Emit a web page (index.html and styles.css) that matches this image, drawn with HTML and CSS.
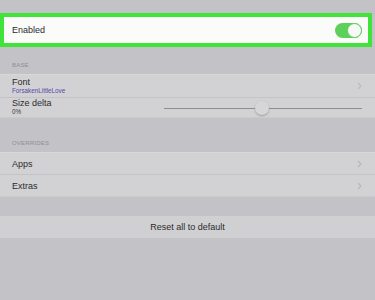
FILE: index.html
```
<!DOCTYPE html>
<html>
<head>
<meta charset="utf-8">
<link rel="stylesheet" href="styles.css">
</head>
<body>
<div class="page">
  <div class="highlight">
    <div class="row enabled">
      <span class="label">Enabled</span>
      <span class="toggle"><span class="knob"></span></span>
    </div>
  </div>
  <div class="section-title">BASE</div>
  <div class="group">
    <div class="row font-row">
      <div class="texts">
        <span class="label">Font</span>
        <span class="sub purple">ForsakenLittleLove</span>
      </div>
      <svg class="chev" width="5" height="8" viewBox="0 0 5 8"><path d="M1 1 L4 4 L1 7" fill="none" stroke="#bdbdc0" stroke-width="1.2"/></svg>
    </div>
    <div class="row size-row">
      <div class="texts">
        <span class="label">Size delta</span>
        <span class="sub">0%</span>
      </div>
      <div class="slider">
        <div class="track"></div>
        <div class="thumb"></div>
      </div>
    </div>
  </div>
  <div class="section-title">OVERRIDES</div>
  <div class="group">
    <div class="row apps-row">
      <span class="label">Apps</span>
      <svg class="chev" width="5" height="8" viewBox="0 0 5 8"><path d="M1 1 L4 4 L1 7" fill="none" stroke="#b8b8bb" stroke-width="1.2"/></svg>
    </div>
    <div class="row extras-row">
      <span class="label">Extras</span>
      <svg class="chev" width="5" height="8" viewBox="0 0 5 8"><path d="M1 1 L4 4 L1 7" fill="none" stroke="#b8b8bb" stroke-width="1.2"/></svg>
    </div>
  </div>
  <div class="reset">Reset all to default</div>
</div>
</body>
</html>
```
FILE: styles.css
```
html, body {
  margin: 0;
  padding: 0;
}
body {
  background: #c3c2c7;
  font-family: "Liberation Sans", Arial, sans-serif;
  color: #2a2a2c;
}
.page {
  width: 375px;
  height: 300px;
  padding-top: 13px;
  box-sizing: border-box;
  overflow: hidden;
}
.highlight {
  width: 372px;
  height: 34px;
  box-sizing: border-box;
  border: 4px solid #3fe33a;
  background: #fbfbfa;
}
.row {
  display: flex;
  align-items: center;
  justify-content: space-between;
  padding: 0 14px 0 12px;
  box-sizing: border-box;
}
.enabled {
  height: 26px;
  padding: 0 6px 0 8px;
}
.label {
  font-size: 9px;
  color: #2b2b2d;
}
.toggle {
  position: relative;
  width: 27px;
  height: 15px;
  border-radius: 8px;
  background: #5dd05a;
  display: inline-block;
}
.knob {
  position: absolute;
  right: 0;
  top: 0;
  width: 15px;
  height: 15px;
  box-sizing: border-box;
  border: 1px solid #5dd05a;
  border-radius: 50%;
  background: #f8f8f8;
}
.section-title {
  height: 27px;
  box-sizing: border-box;
  display: flex;
  align-items: flex-end;
  font-size: 6px;
  line-height: 7px;
  color: #8e8e93;
  padding: 0 0 5px 12px;
  letter-spacing: 0.2px;
}
.group + .section-title {
  height: 34px;
}
.group {
  background: #d2d2d4;
  border-top: 1px solid #d8d8da;
  border-bottom: 1px solid #cbcbce;
}
.font-row {
  height: 22px;
}
.size-row {
  height: 20px;
  border-top: 1px solid #c4c4c7;
}
.apps-row {
  height: 21px;
}
.extras-row {
  height: 22px;
  border-top: 1px solid #c4c4c7;
}
.texts {
  display: flex;
  flex-direction: column;
  line-height: 9px;
}
.sub {
  font-size: 6.3px;
  line-height: 8px;
  color: #3a3a3c;
}
.purple {
  color: #5a48a8;
}
.chev {
  display: block;
  margin-right: -1px;
}
.slider {
  position: relative;
  width: 198px;
  height: 16px;
  margin-right: -1px;
}
.track {
  position: absolute;
  left: 0;
  right: 0;
  top: 8px;
  height: 1px;
  background: #8e8e92;
}
.thumb {
  position: absolute;
  left: 91px;
  top: 1px;
  width: 14px;
  height: 14px;
  border-radius: 50%;
  background: #d6d6d8;
  box-shadow: 0 1px 2px rgba(0,0,0,0.25);
}
.reset {
  margin-top: 19px;
  height: 22px;
  background: #d0d0d2;
  display: flex;
  align-items: center;
  justify-content: center;
  font-size: 9px;
  color: #2b2b2d;
}
```
